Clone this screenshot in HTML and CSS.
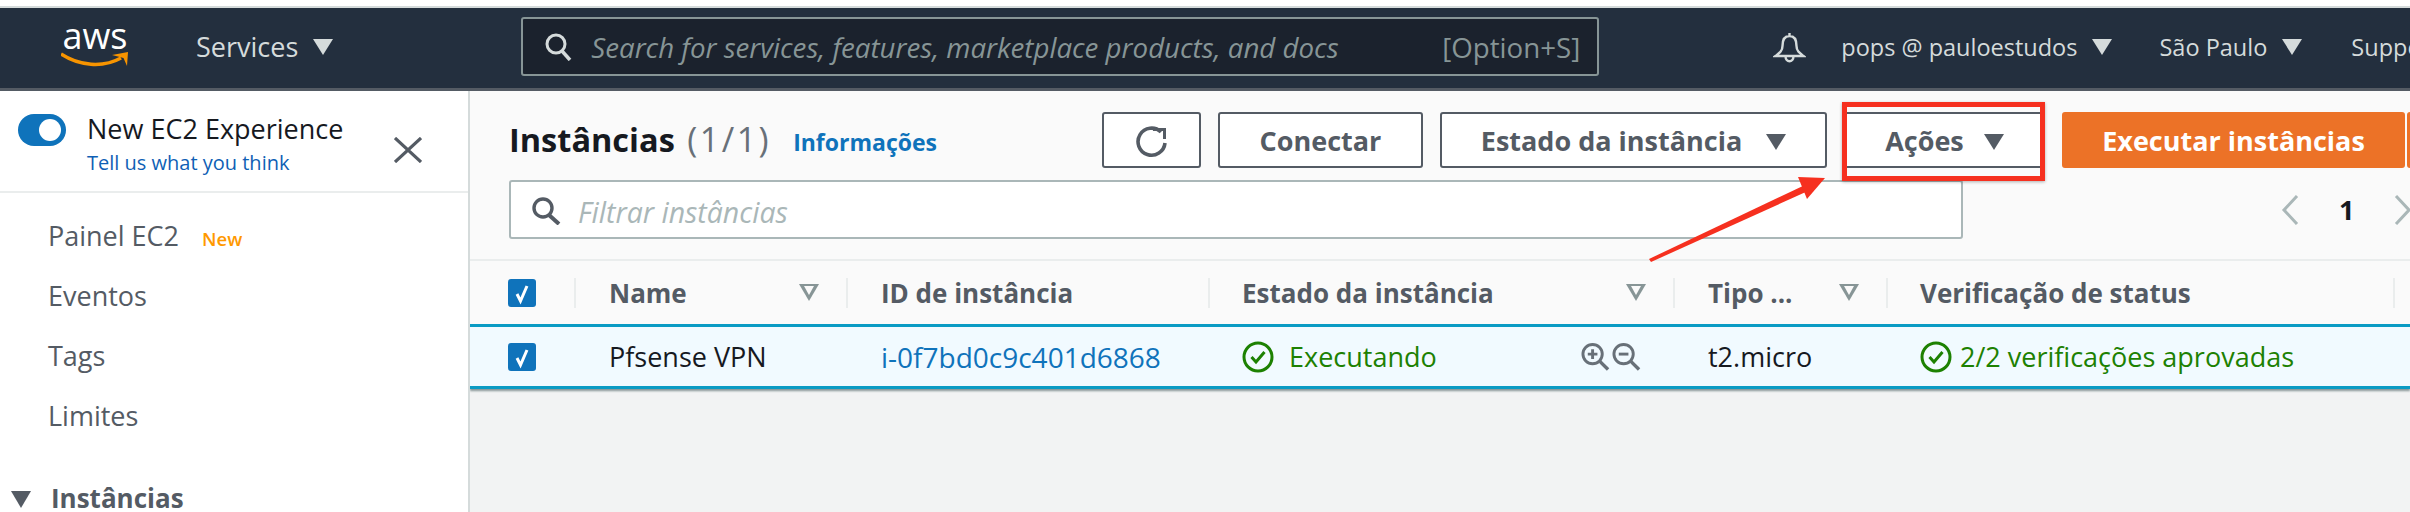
FILE: index.html
```html
<!DOCTYPE html>
<html lang="en">
<head>
  <meta charset="UTF-8">
  <title>Instâncias | EC2</title>
  <link rel="stylesheet" href="styles.css">
</head>
<body>
  <div class="top-gap"></div>
  <nav class="navbar">
    <div class="logo">
      <span class="logo-text">aws</span>
      <svg class="logo-smile" width="68" height="15" viewBox="0 0 68 15"><path d="M0 2C18 14 42 16 60 6" fill="none" stroke="#f79400" stroke-width="3.5"/><path d="M51 3L67 0L66 14L62.500 6Z" fill="#f79400"/></svg>
    </div>
    <span class="nav-link services">Services</span><span class="tri nav-tri"></span>
    <div class="nav-search">
      <svg class="search-icon" width="28" height="28" viewBox="0 0 28 28"><circle cx="12" cy="11" r="9" fill="none" stroke="#d5dbdb" stroke-width="3"/><path d="M18 18L26 27" stroke="#d5dbdb" stroke-width="3.5"/></svg>
      <span class="nav-placeholder">Search for services, features, marketplace products, and docs</span>
      <span class="nav-shortcut">[Option+S]</span>
    </div>
    <svg class="bell" width="33" height="32" viewBox="0 0 32 32"><path d="M16 2V5M16 5C10 5 9 10 9 15C9 20 6 22 2 25H30C26 22 23 20 23 15C23 10 22 5 16 5ZM12 25C12 32 20 32 20 25" fill="none" stroke="#d5dbdb" stroke-width="2.4"/></svg>
    <span class="nav-link nav-small user">pops @ pauloestudos</span><span class="tri nav-tri"></span>
    <span class="nav-link nav-small region">São Paulo</span><span class="tri nav-tri"></span>
    <span class="nav-link nav-small support">Support</span>
  </nav>

  <div class="main">
    <aside class="sidebar">
      <div class="experience">
        <span class="toggle"><span class="toggle-knob"></span></span>
        <div class="experience-text">
          <div class="experience-title">New EC2 Experience</div>
          <a class="experience-link">Tell us what you think</a>
        </div>
        <svg class="close" width="28" height="26" viewBox="0 0 28 26"><path d="M1 1L27 25M27 1L1 25" stroke="#545b64" stroke-width="3.2"/></svg>
      </div>
      <ul class="side-list">
        <li>Painel EC2 <span class="new-tag">New</span></li>
        <li>Eventos</li>
        <li>Tags</li>
        <li>Limites</li>
      </ul>
      <div class="side-section"><span class="tri side-tri"></span>Instâncias</div>
    </aside>

    <section class="content">
      <div class="panel-head">
        <div class="title-row">
          <div class="title-left">
            <h1>Instâncias <span class="count">(1/1)</span></h1>
            <a class="info">Informações</a>
          </div>
          <button class="btn btn-refresh">
            <svg width="34" height="32" viewBox="0 0 34 32"><path d="M26 6A13.500 13.500 0 1 0 30 17" fill="none" stroke="#545b64" stroke-width="3.6"/><path d="M18 2H31V13H28V5H18Z" fill="#545b64"/></svg>
          </button>
          <button class="btn btn-connect">Conectar</button>
          <button class="btn btn-state">Estado da instância<span class="tri btn-tri"></span></button>
          <button class="btn btn-actions">Ações<span class="tri btn-tri"></span></button>
          <button class="btn btn-launch">Executar instâncias</button>
          <button class="btn btn-launch-more"></button>
        </div>
        <div class="filter-row">
          <div class="filter">
            <svg width="30" height="28" viewBox="0 0 30 28"><circle cx="12" cy="11" r="9" fill="none" stroke="#545b64" stroke-width="3.4"/><path d="M18 18L28 27" stroke="#545b64" stroke-width="4"/></svg>
            <span class="filter-text">Filtrar instâncias</span>
          </div>
          <div class="pager">
            <svg width="18" height="30" viewBox="0 0 18 30"><path d="M16 1L3 15L16 29" fill="none" stroke="#aab7b8" stroke-width="3"/></svg>
            <span class="page-num">1</span>
            <svg width="18" height="30" viewBox="0 0 18 30"><path d="M2 1L15 15L2 29" fill="none" stroke="#aab7b8" stroke-width="3"/></svg>
          </div>
        </div>
      </div>

      <div class="grid-row grid-head">
        <div class="cell c-check"><span class="check"><svg width="27" height="28" viewBox="0 0 27 28"><path d="M9 15L12.500 22L19 7" fill="none" stroke="#fff" stroke-width="3"/></svg></span></div>
        <div class="cell c-name">Name<span class="filter-tri"></span></div>
        <div class="cell c-id">ID de instância</div>
        <div class="cell c-state">Estado da instância<span class="filter-tri"></span></div>
        <div class="cell c-type">Tipo ...<span class="filter-tri"></span></div>
        <div class="cell c-status">Verificação de status</div>
      </div>
      <div class="grid-row grid-selected">
        <div class="cell c-check"><span class="check"><svg width="27" height="28" viewBox="0 0 27 28"><path d="M9 15L12.500 22L19 7" fill="none" stroke="#fff" stroke-width="3"/></svg></span></div>
        <div class="cell c-name">Pfsense VPN</div>
        <div class="cell c-id"><a class="id-link">i-0f7bd0c9c401d6868</a></div>
        <div class="cell c-state">
          <span class="ok-text"><svg class="ok-icon" width="32" height="32" viewBox="0 0 32 32"><circle cx="16" cy="16" r="14" fill="none" stroke="#1d8102" stroke-width="3"/><path d="M9.500 16L14 21L22.500 11" fill="none" stroke="#1d8102" stroke-width="3"/></svg>Executando</span>
          <span class="zoom-icons">
            <svg width="29" height="30" viewBox="0 0 30 30"><circle cx="12" cy="12" r="10" fill="none" stroke="#687078" stroke-width="3"/><path d="M19 19L28 28" stroke="#687078" stroke-width="3.500"/><path d="M7 12H17M12 7V17" stroke="#687078" stroke-width="3"/></svg>
            <svg width="29" height="30" viewBox="0 0 30 30"><circle cx="12" cy="12" r="10" fill="none" stroke="#687078" stroke-width="3"/><path d="M19 19L28 28" stroke="#687078" stroke-width="3.500"/><path d="M7 12H17" stroke="#687078" stroke-width="3"/></svg>
          </span>
        </div>
        <div class="cell c-type">t2.micro</div>
        <div class="cell c-status"><span class="ok-text"><svg class="ok-icon-tight" width="32" height="32" viewBox="0 0 32 32"><circle cx="16" cy="16" r="14" fill="none" stroke="#1d8102" stroke-width="3"/><path d="M9.500 16L14 21L22.500 11" fill="none" stroke="#1d8102" stroke-width="3"/></svg>2/2 verificações aprovadas</span></div>
      </div>
    </section>
  </div>

  <!-- annotation drawn over the screenshot -->
  <div class="mark-box"></div>
  <svg class="mark-arrow" width="200" height="100" viewBox="0 0 200 100"><path d="M7 89L9 92L166 21L163 15Z" fill="#f6301f"/><path d="M183 8L156 7L165 29Z" fill="#f6301f"/></svg>
</body>
</html>
```

FILE: styles.css
```css
* {
  box-sizing: border-box;
}
html, body {
  margin: 0;
  height: 512px;
  overflow: hidden;
}
body {
  font-family: "Open Sans", "Noto Sans", sans-serif;
  font-size: 27px;
  color: #16191f;
  background: #fff;
  width: 2410px;
}
ul, h1 {
  margin: 0;
  padding: 0;
}
.top-gap {
  height: 8px;
  border-bottom: 2px solid #d5dbdb;
}

/* top bar */
.navbar {
  display: flex;
  align-items: center;
  height: 83px;
  padding-bottom: 3px;
  background: #232f3e;
  border-bottom: 3px solid #545b64;
  white-space: nowrap;
  overflow: hidden;
}
.logo {
  flex: none;
  width: 68px;
  height: 42px;
  margin-left: 61px;
}
.logo-text {
  display: block;
  text-align: center;
  font-size: 36px;
  line-height: 20px;
  color: #fff;
}
.logo-smile {
  display: block;
  margin-top: 6px;
}
.nav-link {
  flex: none;
  color: #d5dbdb;
  font-size: 27px;
}
.nav-small {
  font-size: 23.500px;
}
.services {
  margin-left: 67px;
}
.tri {
  display: inline-block;
  width: 0;
  height: 0;
  border-left: 10px solid transparent;
  border-right: 10px solid transparent;
  border-top: 16px solid #d5dbdb;
}
.nav-tri {
  margin-left: 15px;
  flex: none;
}
.nav-search {
  display: flex;
  align-items: center;
  flex: none;
  width: 1078px;
  height: 59px;
  margin-left: 188px;
  padding: 0 17px 0 21px;
  background: #1b222d;
  border: 2px solid #879596;
  border-radius: 3px;
  font-size: 27.700px;
}
.search-icon {
  flex: none;
}
.nav-placeholder {
  margin-left: 19px;
  font-style: italic;
  color: #879596;
  flex: 1;
}
.nav-shortcut {
  color: #879596;
}
.bell {
  flex: none;
  margin-left: 174px;
}
.user {
  margin-left: 35px;
}
.region {
  margin-left: 47px;
}
.support {
  margin-left: 49px;
}

.main {
  display: flex;
  height: 421px;
}

/* left menu */
.sidebar {
  flex: none;
  width: 470px;
  height: 100%;
  border-right: 2px solid #d5dbdb;
  overflow: hidden;
}
.experience {
  display: flex;
  height: 102px;
  padding: 22px 0 0 18px;
  border-bottom: 2px solid #eaeded;
}
.toggle {
  flex: none;
  display: flex;
  align-items: center;
  justify-content: flex-end;
  width: 48px;
  height: 32px;
  margin-top: 1px;
  padding-right: 5px;
  background: #0f73bb;
  border-radius: 16px;
}
.toggle-knob {
  width: 22px;
  height: 22px;
  background: #fff;
  border-radius: 50%;
}
.experience-text {
  margin-left: 21px;
  width: 307px;
  white-space: nowrap;
}
.experience-title {
  line-height: 32px;
}
.experience-link {
  display: block;
  font-size: 20px;
  line-height: 26px;
  margin-top: 5px;
  color: #0f5fb5;
}
.close {
  margin-top: 24px;
}
.side-list {
  list-style: none;
  padding-left: 48px;
  padding-top: 13px;
  color: #545b64;
}
.side-list li {
  height: 60px;
  line-height: 60px;
}
.new-tag {
  margin-left: 16px;
  font-size: 18.500px;
  font-weight: 600;
  color: #ff9900;
}
.side-section {
  margin-top: 32px;
  padding-left: 11px;
  font-size: 26px;
  line-height: 40px;
  font-weight: 700;
  color: #545b64;
}
.side-tri {
  margin-right: 20px;
  border-top-color: #545b64;
  border-top-width: 17px;
}

/* instances panel */
.content {
  flex: 1;
  min-width: 0;
  background: #f2f3f3;
  overflow: hidden;
}
.panel-head {
  height: 170px;
  padding: 21px 0 0 39px;
  background: #fafafa;
  border-bottom: 2px solid #eaeded;
}
.title-row {
  display: flex;
  align-items: center;
  height: 56px;
}
.title-left {
  display: flex;
  align-items: center;
  flex: none;
  width: 593px;
  margin-top: -2px;
}
h1 {
  flex: none;
  font-size: 32.500px;
  font-weight: 700;
}
.count {
  margin-left: 4px;
  font-size: 34px;
  font-weight: 400;
  letter-spacing: 2.500px;
  color: #687078;
}
.info {
  flex: none;
  margin-left: 22px;
  margin-top: 6px;
  font-size: 23px;
  font-weight: 700;
  color: #0f73bb;
}
.btn {
  flex: none;
  height: 56px;
  padding: 0;
  font-family: inherit;
  font-size: 27px;
  font-weight: 700;
  color: #545b64;
  background: #fff;
  border: 2px solid #545b64;
  border-radius: 3px;
}
.btn-refresh {
  width: 99px;
}
.btn-refresh svg {
  display: block;
  margin: 4px auto 0;
}
.btn-connect {
  width: 205px;
  margin-left: 17px;
}
.btn-state {
  width: 387px;
  margin-left: 17px;
}
.btn-actions {
  width: 200px;
  margin-left: 16px;
  padding-left: 3px;
}
.btn-tri {
  margin-left: 24px;
  border-top-color: #545b64;
  vertical-align: 1px;
}
.btn-actions .btn-tri {
  margin-left: 20px;
}
.btn-launch {
  width: 343px;
  margin-left: 19px;
  color: #fff;
  background: #ec7227;
  border-color: #ec7227;
}
.btn-launch-more {
  width: 60px;
  margin-left: 2px;
  background: #ec7227;
  border-color: #ec7227;
}
.filter-row {
  display: flex;
  align-items: center;
  margin-top: 12px;
}
.filter {
  display: flex;
  align-items: center;
  flex: none;
  width: 1454px;
  height: 59px;
  padding-left: 20px;
  background: #fff;
  border: 2px solid #aab7b8;
  border-radius: 3px;
}
.filter svg {
  margin-top: 2px;
}
.filter-text {
  margin-left: 17px;
  padding-top: 5px;
  font-size: 28.500px;
  font-style: italic;
  color: #aab7b8;
}
.pager {
  display: flex;
  align-items: center;
  gap: 40px;
  margin-left: 318px;
}
.page-num {
  font-weight: 700;
}

/* table */
.grid-row {
  display: flex;
  align-items: center;
  height: 63px;
  white-space: nowrap;
}
.grid-head {
  background: #fafafa;
  font-weight: 700;
  font-size: 26px;
  color: #545b64;
}
.grid-selected {
  height: 65px;
  background: #f1faff;
  border-top: 3px solid #0a9bc4;
  border-bottom: 3px solid #0a9bc4;
  box-shadow: 0 2px 2px #879596;
}
.cell {
  display: flex;
  align-items: center;
  flex: none;
  height: 30px;
}
.grid-head .cell {
  border-right: 2px solid #eaeded;
}
.c-check {
  width: 106px;
  padding-left: 38px;
}
.c-name {
  width: 272px;
  padding-left: 33px;
}
.c-id {
  width: 362px;
  padding-left: 33px;
}
.c-state {
  width: 465px;
  padding-left: 32px;
}
.c-type {
  width: 213px;
  padding-left: 33px;
}
.c-status {
  width: 507px;
  padding-left: 32px;
}
.check {
  display: block;
  width: 28px;
  height: 28px;
  background: #0f73bb;
  border-radius: 3px;
}
.check svg {
  display: block;
}
.filter-tri {
  position: relative;
  margin-left: auto;
  margin-right: 27px;
  width: 0;
  height: 0;
  border-left: 10px solid transparent;
  border-right: 10px solid transparent;
  border-top: 17px solid #879596;
}
.filter-tri::after {
  content: "";
  position: absolute;
  left: -5px;
  top: -15px;
  border-left: 5px solid transparent;
  border-right: 5px solid transparent;
  border-top: 9px solid #fafafa;
}
.id-link {
  font-size: 28px;
  color: #0f73bb;
}
.ok-text {
  display: flex;
  align-items: center;
  color: #1d8102;
}
.ok-icon {
  margin-right: 15px;
}
.ok-icon-tight {
  margin-right: 8px;
}
.zoom-icons {
  display: flex;
  gap: 2px;
  margin-left: auto;
  margin-right: 34px;
}

/* red annotation */
.mark-box {
  position: absolute;
  left: 1842px;
  top: 102px;
  width: 203px;
  height: 79px;
  border: 5px solid #f6301f;
  box-shadow: 0 1px 3px rgba(0, 0, 0, 0.3);
}
.mark-arrow {
  position: absolute;
  left: 1642px;
  top: 170px;
}
```
